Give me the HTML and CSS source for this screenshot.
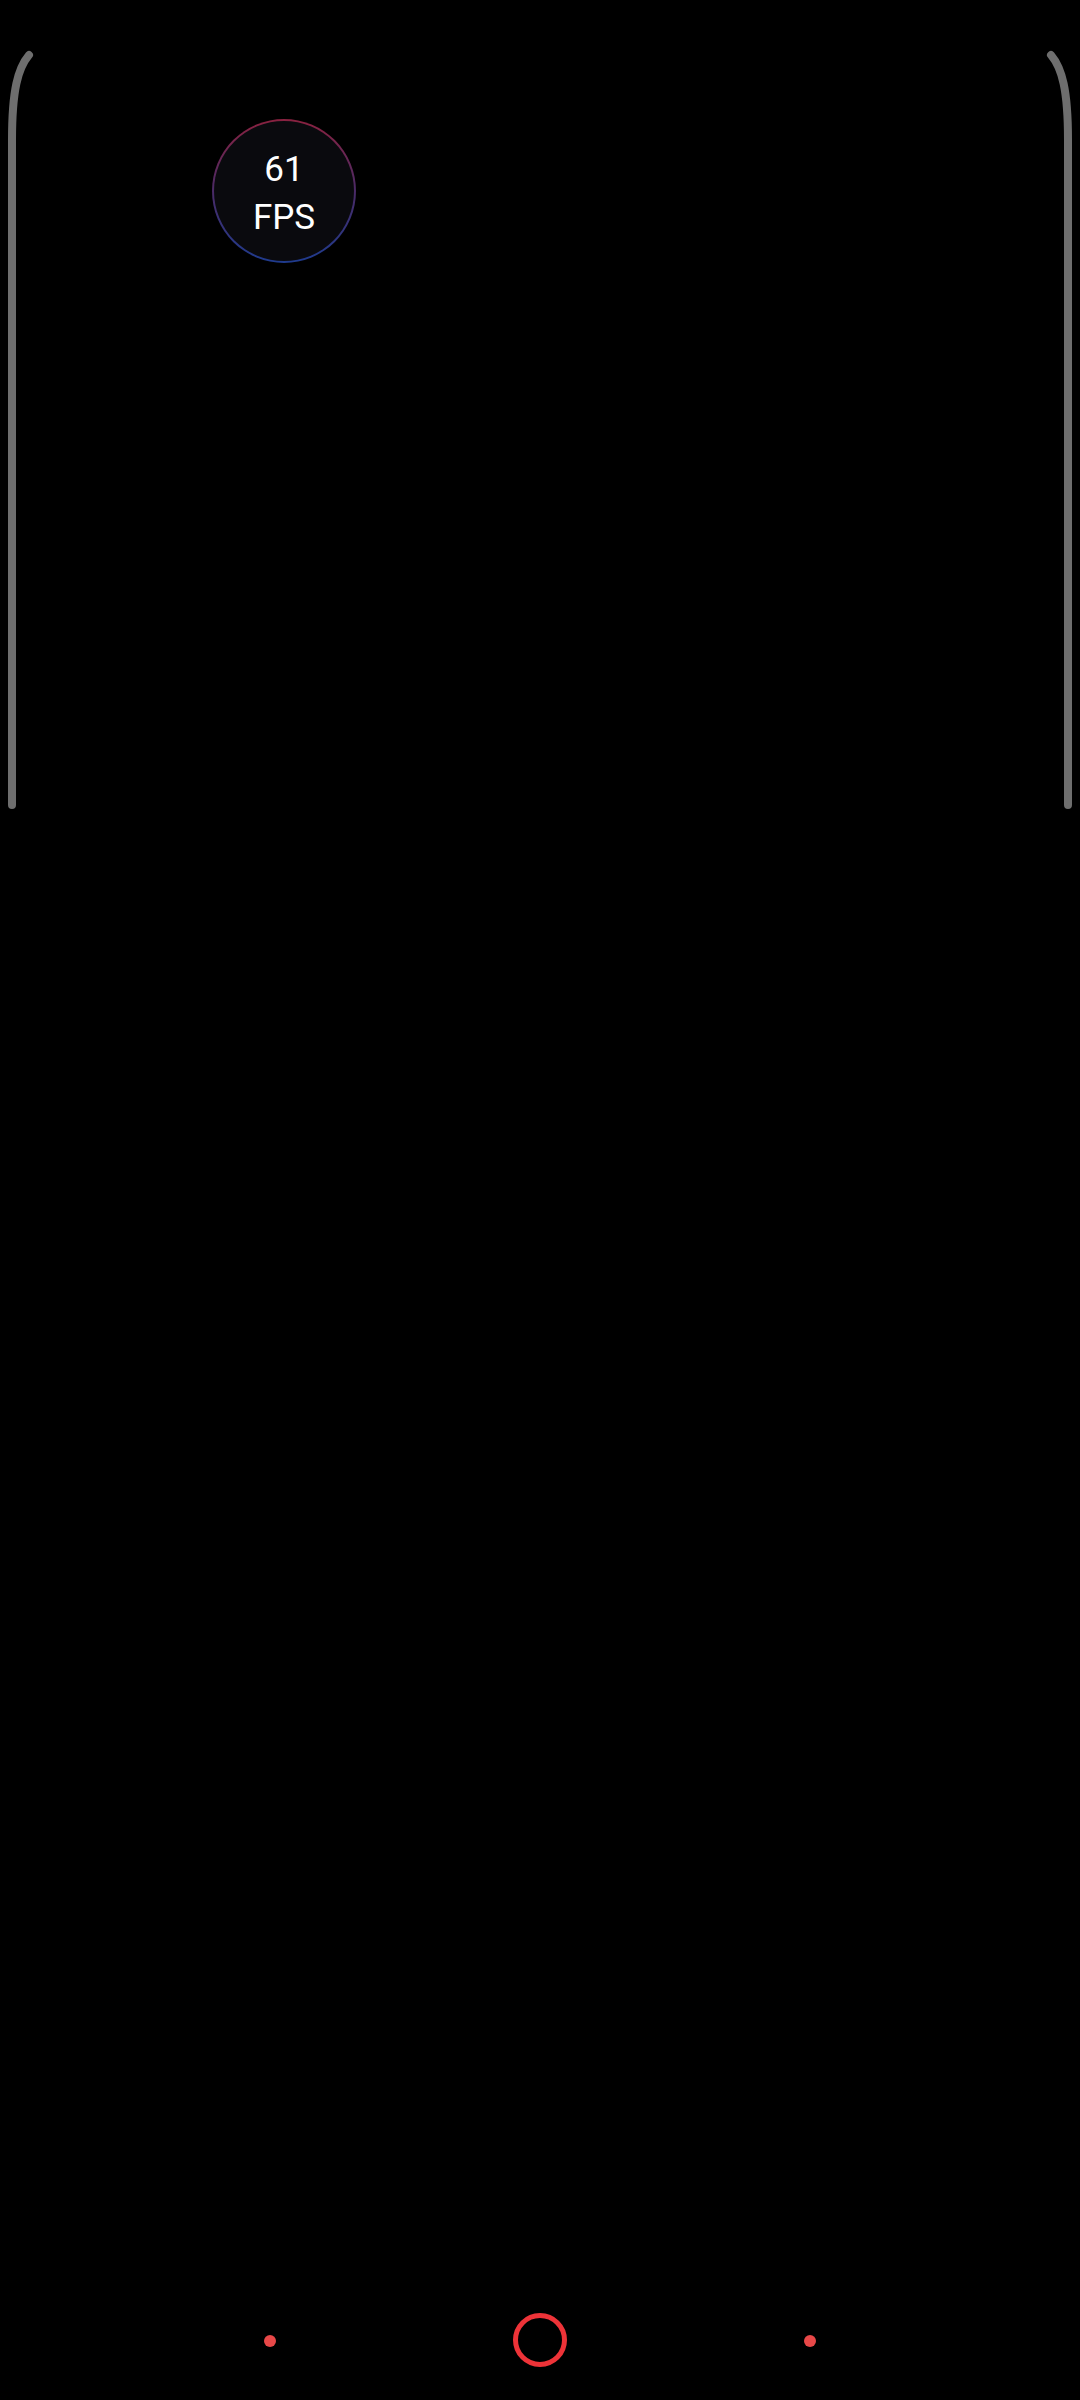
FILE: index.html
```html
<!DOCTYPE html>
<html>
<head>
<meta charset="utf-8">
<link rel="stylesheet" href="styles.css">
</head>
<body>
<div class="screen">
  <svg class="edges" width="1080" height="820" viewBox="0 0 1080 820">
    <path class="edge" d="M29 55 C18 68 12 90 12 140 L12 805"/>
    <path class="edge" d="M1051 55 C1062 68 1068 90 1068 140 L1068 805"/>
  </svg>
  <div class="fps">
    <span class="fps-num">61</span>
    <span class="fps-label">FPS</span>
  </div>
  <div class="spacer"></div>
  <nav class="navbar">
    <div class="nav-item"><span class="dot"></span></div>
    <div class="nav-item"><span class="ring"></span></div>
    <div class="nav-item"><span class="dot"></span></div>
  </nav>
</div>
</body>
</html>
```
FILE: styles.css
```css
html, body {
  margin: 0;
  padding: 0;
  background: #000;
}
.screen {
  position: relative;
  width: 1080px;
  height: 2400px;
  display: flex;
  flex-direction: column;
  background: #000;
  font-family: Roboto, "Noto Sans", sans-serif;
  overflow: hidden;
}
.edges {
  position: absolute;
  left: 0;
  top: 0;
}
.edge {
  fill: none;
  stroke: #6e6e6e;
  stroke-width: 8;
  stroke-linecap: round;
}
.fps {
  position: absolute;
  left: 212px;
  top: 119px;
  width: 140px;
  height: 140px;
  box-sizing: content-box;
  border-radius: 50%;
  border: 2px solid transparent;
  background: linear-gradient(#0a0a0e, #0a0a0e) padding-box,
              linear-gradient(180deg, #8a2240 0%, #4a2a66 50%, #1f3b8e 100%) border-box;
  display: flex;
  flex-direction: column;
  align-items: center;
  justify-content: center;
  color: #fff;
  font-size: 35px;
  line-height: 48px;
  padding-top: 0;
}
.fps-num, .fps-label {
  display: block;
  position: relative;
  top: 3px;
}
.spacer {
  flex: 1;
}
.navbar {
  height: 120px;
  padding: 0 135px;
  display: grid;
  grid-template-columns: repeat(3, 270px);
  align-items: center;
}
.nav-item {
  display: flex;
  justify-content: center;
  align-items: center;
}
.dot {
  width: 12px;
  height: 12px;
  border-radius: 50%;
  background: #e84848;
  margin-top: 2px;
}
.ring {
  width: 44px;
  height: 44px;
  border-radius: 50%;
  border: 5px solid #ee3338;
}
```
